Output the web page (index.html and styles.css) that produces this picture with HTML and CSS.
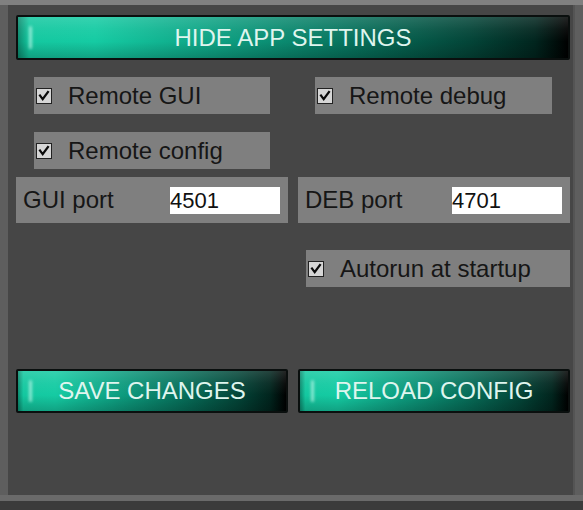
FILE: index.html
```html
<!DOCTYPE html>
<html>
<head>
<meta charset="utf-8">
<link rel="stylesheet" href="styles.css">
</head>
<body>
<div class="frame">
  <div class="panel">
    <div class="btn btn-wide"><span>HIDE APP SETTINGS</span></div>

    <div class="grid row-b">
      <div class="cell"><label class="check left-check"><span class="box"><svg viewBox="0 0 16 16"><path d="M3.5 7.5 L6.5 11.5 L12.5 3.5" /></svg></span>Remote GUI</label></div>
      <div class="cell"><label class="check right-check"><span class="box"><svg viewBox="0 0 16 16"><path d="M3.5 7.5 L6.5 11.5 L12.5 3.5" /></svg></span>Remote debug</label></div>
    </div>

    <div class="grid row-c">
      <div class="cell"><label class="check left-check"><span class="box"><svg viewBox="0 0 16 16"><path d="M3.5 7.5 L6.5 11.5 L12.5 3.5" /></svg></span>Remote config</label></div>
      <div class="cell"></div>
    </div>

    <div class="grid row-d">
      <div class="port"><span class="port-label">GUI port</span><span class="input">4501</span></div>
      <div class="port"><span class="port-label">DEB port</span><span class="input">4701</span></div>
    </div>

    <div class="grid row-e">
      <div class="cell"></div>
      <div class="cell"><label class="check auto-check"><span class="box"><svg viewBox="0 0 16 16"><path d="M3.5 7.5 L6.5 11.5 L12.5 3.5" /></svg></span>Autorun at startup</label></div>
    </div>

    <div class="grid row-f">
      <div class="btn"><span>SAVE CHANGES</span></div>
      <div class="btn"><span>RELOAD CONFIG</span></div>
    </div>
  </div>
</div>
</body>
</html>
```

FILE: styles.css
```css
html, body {
  margin: 0;
  padding: 0;
}
body {
  width: 583px;
  height: 510px;
  background: #3b3b3b;
  font-family: "Liberation Sans", Arial, sans-serif;
  overflow: hidden;
}
.frame {
  height: 490px;
  background: #5e5e5e;
  border-top: 5px solid #808080;
  border-bottom: 6px solid #6a6a6a;
  padding: 0 8px 0 8px;
  box-sizing: content-box;
}
.panel {
  height: 490px;
  background: #464646;
  padding: 10px 5px 0 8px;
  box-sizing: border-box;
  border-right: 2px solid #545454;
}
.btn {
  position: relative;
  height: 45px;
  box-sizing: border-box;
  border: 2px solid #0a0f0e;
  border-radius: 2px;
  background:
    linear-gradient(to bottom, rgba(255,255,255,0.14) 0%, rgba(255,255,255,0.05) 30%, rgba(0,0,0,0) 60%, rgba(0,0,0,0.2) 100%),
    linear-gradient(to right, #0b8a6e 0%, #14c8a0 2%, #15cba3 14%, #0ea384 35%, #07735d 60%, #034538 82%, #01251e 94%, #000 100%);
  display: flex;
  align-items: center;
  justify-content: center;
  overflow: hidden;
}
.btn::before {
  content: "";
  position: absolute;
  left: 11px;
  top: 9px;
  bottom: 9px;
  width: 3px;
  border-radius: 2px;
  background: rgba(225,255,248,0.6);
  filter: blur(1.5px);
}
.btn span {
  color: #dff5ee;
  font-size: 24px;
  letter-spacing: 0;
  position: relative;
}
.btn-wide {
  width: 554px;
}
.grid {
  display: grid;
  grid-template-columns: 272px 272px;
  column-gap: 10px;
}
.row-b { margin-top: 17px; height: 37px; }
.row-c { margin-top: 18px; height: 37px; }
.row-d { margin-top: 8px; height: 46px; }
.row-e { margin-top: 27px; height: 37px; }
.row-f { margin-top: 82px; height: 44px; }
.row-f .btn { height: 44px; }

.check {
  display: flex;
  align-items: center;
  height: 37px;
  background: #7f7f7f;
  color: #161616;
  font-size: 24px;
  box-sizing: border-box;
  padding-left: 2px;
}
.left-check { margin-left: 18px; width: 236px; }
.right-check { margin-left: 17px; width: 237px; }
.auto-check { margin-left: 8px; width: 264px; }
.box {
  width: 16px;
  height: 16px;
  box-sizing: border-box;
  border: 1px solid #222;
  background: #d6d6d6;
  margin-right: 16px;
  display: flex;
  flex-shrink: 0;
}
.box svg {
  width: 14px;
  height: 14px;
}
.box path {
  fill: none;
  stroke: #0a0a0a;
  stroke-width: 2.6;
  stroke-linecap: square;
}
.port {
  display: flex;
  align-items: center;
  background: #7f7f7f;
  height: 46px;
  padding-left: 7px;
  box-sizing: border-box;
}
.port-label {
  color: #161616;
  font-size: 24px;
  width: 147px;
}
.input {
  width: 110px;
  height: 27px;
  background: #fff;
  color: #111;
  font-size: 22px;
  line-height: 28px;
}
```
